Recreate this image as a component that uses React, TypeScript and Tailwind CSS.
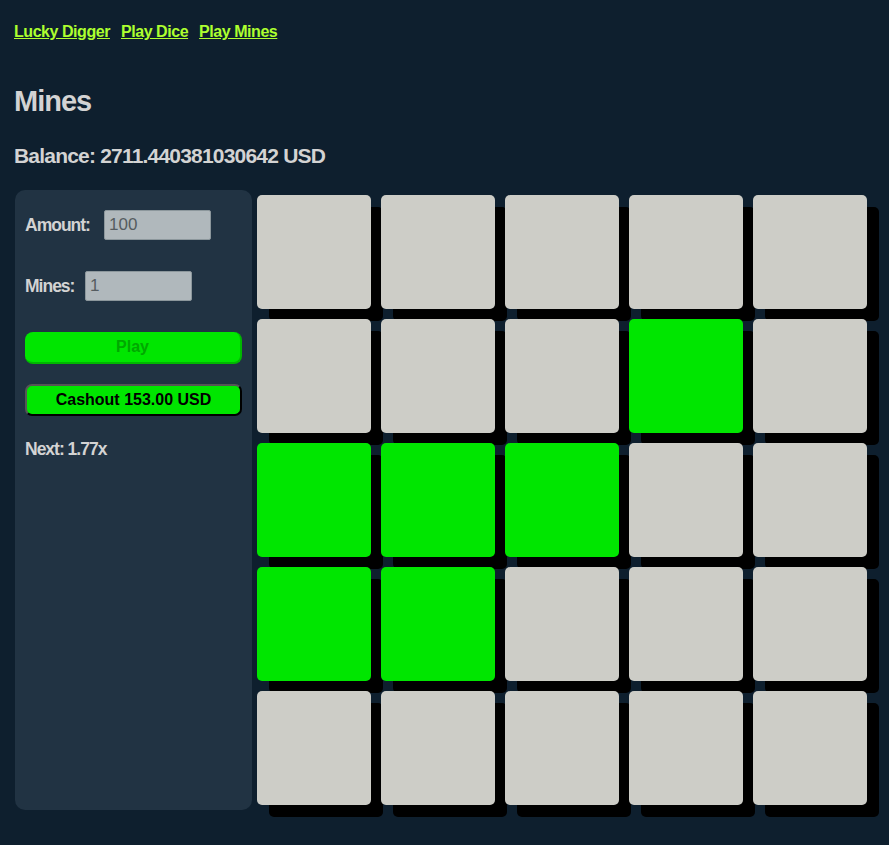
import React from "react";

const revealed = new Set([8, 10, 11, 12, 15, 16]);

function Tile({ gem }: { gem: boolean }) {
  return (
    <div
      className={`m-[5px] w-[114px] h-[114px] rounded-[5px] shadow-[12px_12px_0_#000] ${gem ? "bg-[#00e600]" : "bg-[#cdcdc7]"}`}
    />
  );
}

export default function App() {
  return (
    <div className="min-h-[845px] bg-[#0e1f2e] text-[#d3d3d3] font-['Liberation_Sans',Arial,sans-serif] pl-[14px] pt-[22px]">
      {/* nav */}
      <nav className="flex gap-[11px] text-[16px] font-bold tracking-[-0.45px] leading-[20px]">
        <a href="#" className="text-[#adff2f] underline">Lucky Digger</a>
        <a href="#" className="text-[#adff2f] underline">Play Dice</a>
        <a href="#" className="text-[#adff2f] underline">Play Mines</a>
      </nav>

      <h1 className="mt-[42px] text-[29px] font-bold tracking-[-1px] leading-[34px]">Mines</h1>
      <h2 className="mt-[25px] text-[21px] font-bold tracking-[-0.8px] leading-[26px]">Balance: 2711.440381030642 USD</h2>

      <div className="mt-[21px] flex pl-[1px]">
        {/* controls */}
        <div className="w-[237px] bg-[#213343] rounded-[10px] p-[10px] pt-[20px]">
          <div className="flex items-center h-[30px] text-[17.5px] font-bold tracking-[-1px]">
            <span className="w-[79px]">Amount:</span>
            <input
              defaultValue="100"
              className="w-[107px] h-[30px] bg-[#b0b8bc] border border-[#8c979c] rounded-[2px] px-[4px] text-[#555c60] text-[17px] font-normal tracking-normal outline-none"
            />
          </div>
          <div className="flex items-center h-[30px] mt-[31px] text-[17.5px] font-bold tracking-[-1px]">
            <span className="w-[60px]">Mines:</span>
            <input
              defaultValue="1"
              className="w-[107px] h-[30px] bg-[#b0b8bc] border border-[#8c979c] rounded-[2px] px-[4px] text-[#555c60] text-[17px] font-normal tracking-normal outline-none"
            />
          </div>
          <button
            disabled
            className="mt-[31px] w-[217px] h-[32px] rounded-[8px] bg-[#00e600] border-b-2 border-r-2 border-[#00b800] text-[#00a800] text-[16px] font-bold"
          >
            Play
          </button>
          <button className="mt-[20px] w-[217px] h-[32px] rounded-[7px] bg-[#00e600] border-2 border-t-[#555] border-l-[#555] border-b-black border-r-black text-black text-[16px] font-bold">
            Cashout 153.00 USD
          </button>
          <p className="mt-[20px] text-[17.5px] font-bold tracking-[-1px]">Next: 1.77x</p>
        </div>

        {/* grid */}
        <div className="grid grid-cols-5 w-[620px]">
          {Array.from({ length: 25 }, (_, i) => (
            <Tile key={i} gem={revealed.has(i)} />
          ))}
        </div>
      </div>
    </div>
  );
}
